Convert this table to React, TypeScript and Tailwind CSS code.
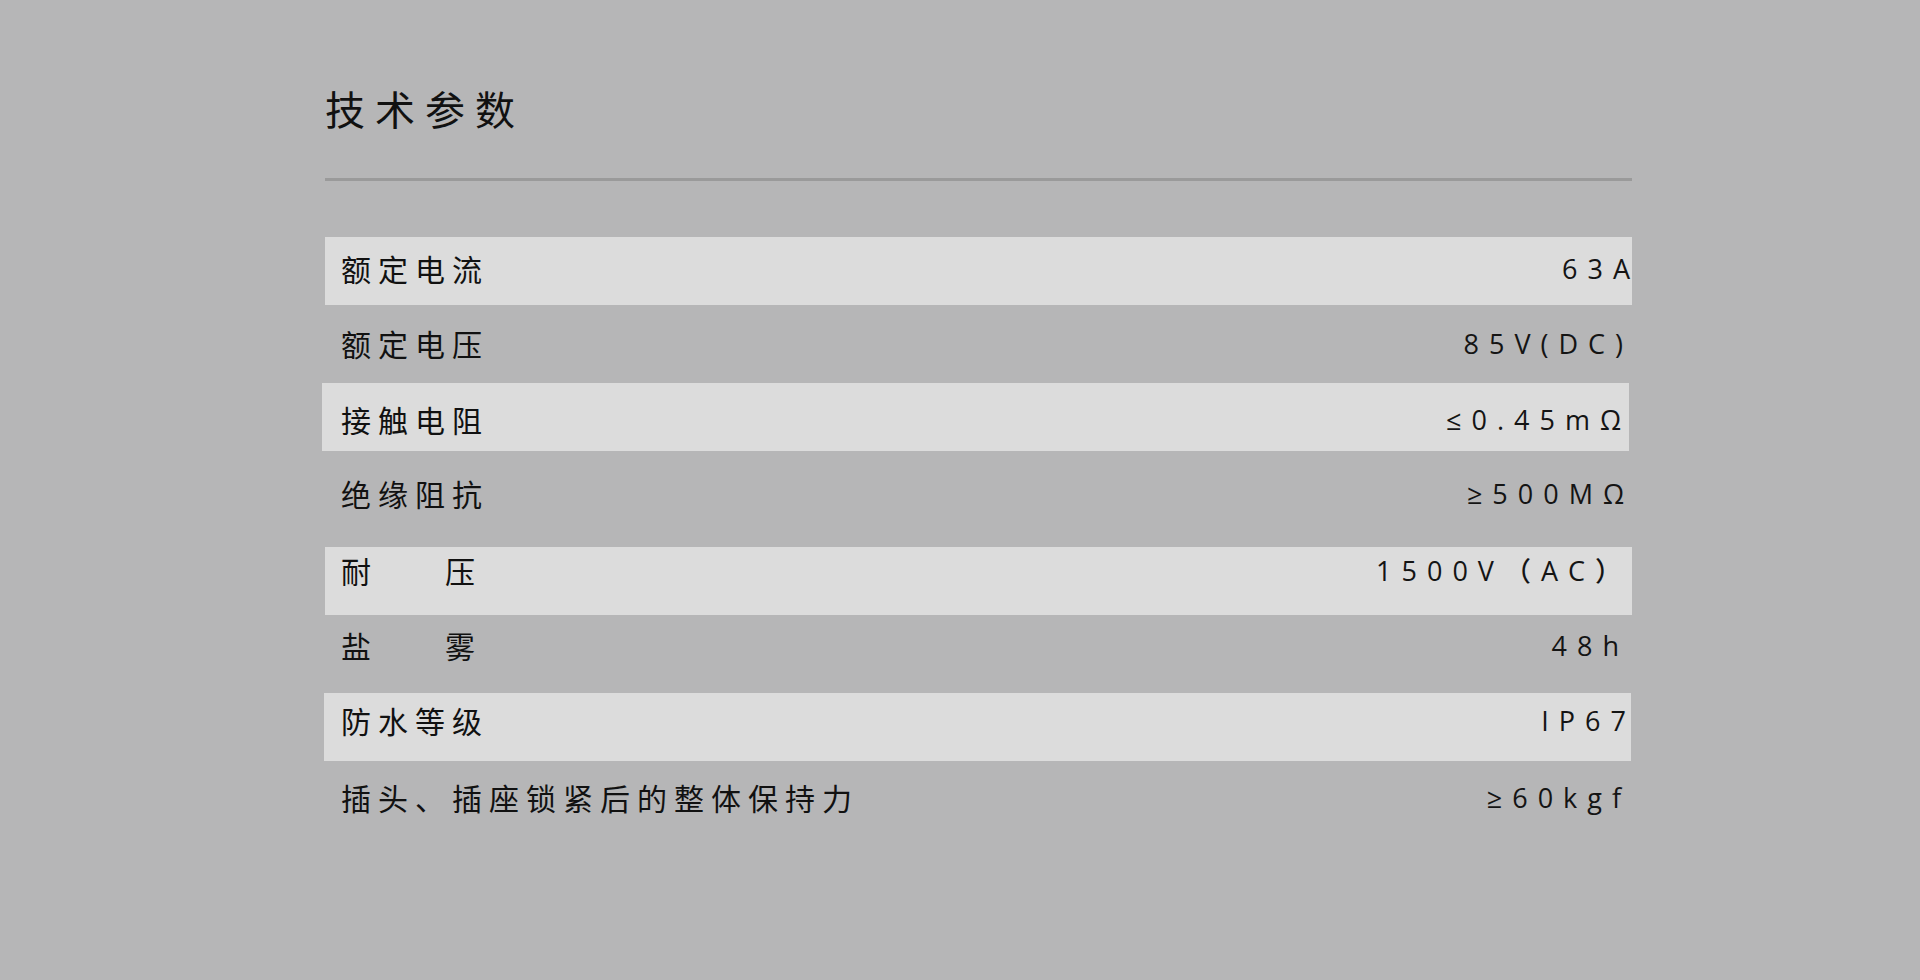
import React from "react";

type Row = {
  label: React.ReactNode;
  value: string;
  shaded: boolean;
  h: string;
  pt: string;
  pr: string;
  pl: string;
  shift?: string;
};

const rows: Row[] = [
  { label: "额定电流", value: "63A", shaded: true, h: "h-[68px]", pt: "pt-[16px]", pr: "pr-[2px]", pl: "pl-[16px]" },
  { label: "额定电压", value: "85V(DC)", shaded: false, h: "h-[78px]", pt: "pt-[23px]", pr: "pr-[9px]", pl: "pl-[16px]" },
  { label: "接触电阻", value: "≤0.45mΩ", shaded: true, h: "h-[68px]", pt: "pt-[21px]", pr: "pr-[8px]", pl: "pl-[19px]", shift: "ml-[-3px] mr-[3px]" },
  { label: "绝缘阻抗", value: "≥500MΩ", shaded: false, h: "h-[96px]", pt: "pt-[27px]", pr: "pr-[8px]", pl: "pl-[16px]" },
  {
    label: (
      <>
        <span>耐</span>
        <span className="ml-[67px]">压</span>
      </>
    ),
    value: "1500V（AC）",
    shaded: true,
    h: "h-[68px]",
    pt: "pt-[8px]",
    pr: "pr-[10px]",
    pl: "pl-[16px]",
  },
  {
    label: (
      <>
        <span>盐</span>
        <span className="ml-[67px]">雾</span>
      </>
    ),
    value: "48h",
    shaded: false,
    h: "h-[78px]",
    pt: "pt-[15px]",
    pr: "pr-[13px]",
    pl: "pl-[16px]",
  },
  { label: "防水等级", value: "IP67", shaded: true, h: "h-[68px]", pt: "pt-[12px]", pr: "pr-[5px]", pl: "pl-[17px]", shift: "ml-[-1px] mr-[1px]" },
  { label: "插头、插座锁紧后的整体保持力", value: "≥60kgf", shaded: false, h: "h-[76px]", pt: "pt-[21px]", pr: "pr-[11px]", pl: "pl-[16px]" },
];

export default function App() {
  return (
    <div className="w-full h-screen bg-[#b6b6b7] overflow-hidden">
      <div className="pl-[325px] pt-[88px] w-[1632px]">
        <h1
          className="text-[40px] leading-[40px] h-[40px] tracking-[10px] text-[#111111] font-normal"
          style={{ fontFamily: '"Noto Sans CJK SC", "Noto Sans", sans-serif' }}
        >
          技术参数
        </h1>
        <div className="mt-[50px] h-[3px] bg-[#9a9a9a]" />
        <div className="mt-[56px] flex flex-col">
          {rows.map((r, i) => (
            <div
              key={i}
              className={`flex items-start justify-between ${r.h} ${r.pt} ${r.shaded ? "bg-[#dcdcdc]" : ""} ${r.shift ?? ""}`}
            >
              <div
                className={`${r.pl} text-[30px] leading-[30px] tracking-[7px] text-[#111111] whitespace-nowrap`}
                style={{ fontFamily: '"Noto Sans CJK SC", "Noto Sans", sans-serif' }}
              >
                {r.label}
              </div>
              <div className={`${r.pr} mt-[1px]`}>
                <span
                  className="block mr-[-10px] text-[27px] leading-[30px] tracking-[10px] font-medium text-[#141414] whitespace-nowrap"
                  style={{ fontFamily: '"Open Sans", "DejaVu Sans", "Noto Sans CJK SC", sans-serif' }}
                >
                  {r.value}
                </span>
              </div>
            </div>
          ))}
        </div>
      </div>
    </div>
  );
}
